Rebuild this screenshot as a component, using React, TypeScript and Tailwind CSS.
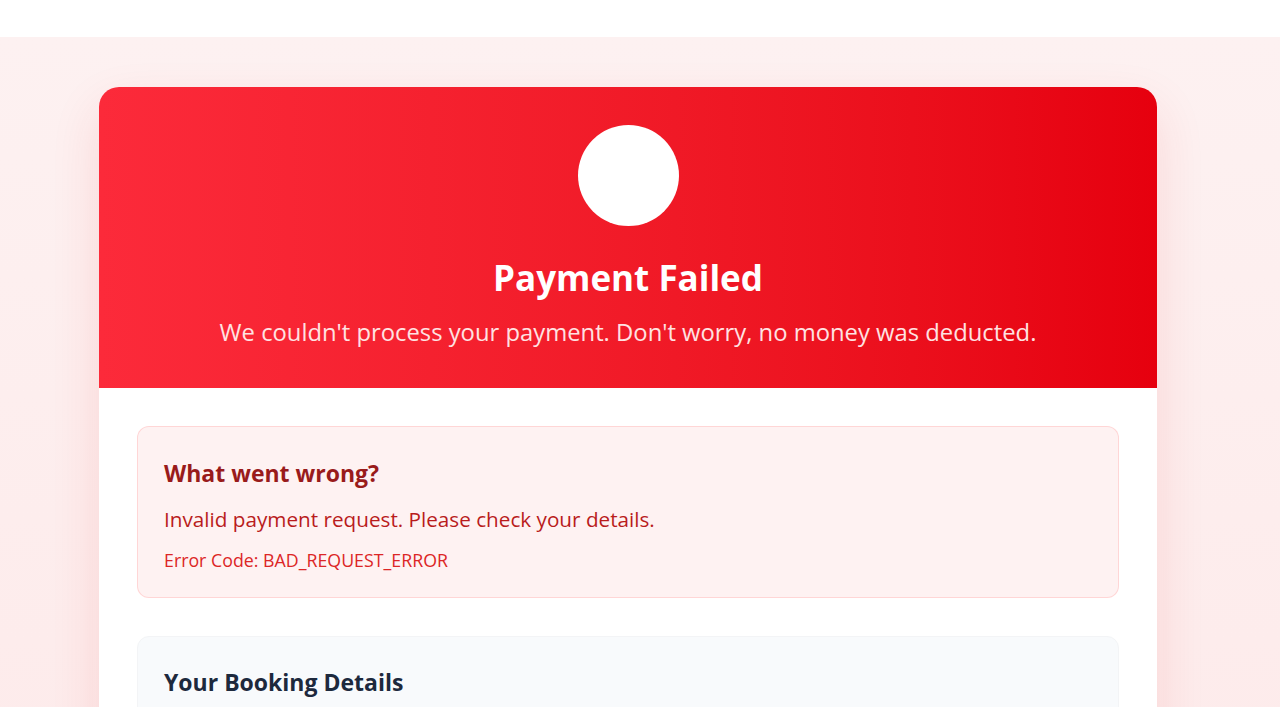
const font = { fontFamily: '"Open Sans", "Noto Sans", sans-serif' };

function ErrorBox() {
  return (
    <div className="rounded-xl border border-red-200/70 bg-red-50 px-[26px] pt-[31px] pb-[24px]">
      <h2 className="text-[23px] font-bold leading-[30px] text-[#991b1b]">What went wrong?</h2>
      <p className="mt-[17px] text-[20.7px] leading-[28px] text-[#b91c1c]">
        Invalid payment request. Please check your details.
      </p>
      <p className="mt-[14px] text-[17.8px] leading-[26px] text-[#dc2626]">Error Code: BAD_REQUEST_ERROR</p>
    </div>
  );
}

function BookingBox() {
  return (
    <div className="rounded-xl border border-gray-100 bg-slate-50 px-[26px] pt-[28px] pb-[26px]">
      <h2 className="text-[23px] font-bold leading-[34px] text-slate-800">Your Booking Details</h2>
      <div className="mt-4 h-40" />
    </div>
  );
}

export default function App() {
  return (
    <div className="min-h-screen bg-white" style={font}>
      <div className="h-[37px] bg-white" />
      <div className="bg-gradient-to-b from-[#fdf1f1] to-[#fde9e9] pt-[50px] pb-16">
        <div className="ml-[99px] w-[1058px] overflow-hidden rounded-[20px] bg-white shadow-[0_20px_50px_rgba(220,38,38,0.12)]">
          <div className="flex flex-col items-center bg-gradient-to-r from-[#fc2a3a] to-[#e6000e] pt-[38px] pb-[39px]">
            <div className="h-[101px] w-[101px] rounded-full bg-white" />
            <h1 className="mt-[28px] text-[35px] font-bold leading-[48px] text-white">Payment Failed</h1>
            <p className="mt-[13px] text-[23.8px] leading-[34px] text-red-100">
              We couldn't process your payment. Don't worry, no money was deducted.
            </p>
          </div>
          <div className="flex flex-col gap-[38px] p-[38px]">
            <ErrorBox />
            <BookingBox />
          </div>
        </div>
      </div>
    </div>
  );
}
